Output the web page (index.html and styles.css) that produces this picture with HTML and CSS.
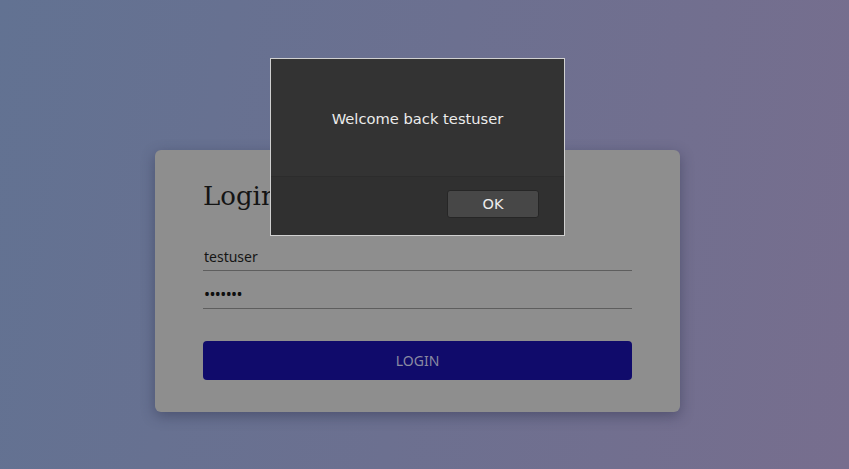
FILE: index.html
```html
<!DOCTYPE html>
<html>
<head>
<meta charset="utf-8">
<link rel="stylesheet" href="styles.css">
</head>
<body>
<div class="page">
  <div class="card">
    <h1 class="title">Login</h1>
    <div class="field"><span class="value">testuser</span></div>
    <div class="field"><span class="value dots">•••••••</span></div>
    <button class="login-btn">LOGIN</button>
  </div>
  <div class="dialog">
    <div class="dialog-body">Welcome back testuser</div>
    <div class="dialog-foot"><button class="ok-btn">OK</button></div>
  </div>
</div>
</body>
</html>
```

FILE: styles.css
```css
html, body {
  margin: 0;
  height: 100%;
}
body {
  background: linear-gradient(100deg, #627292 0%, #6c7090 50%, #776e8e 100%);
  font-family: "Noto Sans", "DejaVu Sans", sans-serif;
  overflow: hidden;
}
.page {
  position: relative;
  height: 100%;
  display: flex;
  justify-content: center;
  align-items: flex-start;
  padding-top: 150px;
  padding-right: 14px;
  box-sizing: border-box;
}
.card {
  width: 525px;
  height: 262px;
  box-sizing: border-box;
  background: #8e8e8e;
  border-radius: 6px;
  box-shadow: 0 4px 14px rgba(40, 44, 70, 0.45);
  padding: 30px 48px 0 48px;
  display: flex;
  flex-direction: column;
}
.title {
  margin: 0 0 30px 0;
  font-family: "DejaVu Serif", serif;
  font-weight: normal;
  font-size: 26px;
  line-height: 32px;
  color: #141414;
}
.field {
  border-bottom: 1px solid #5e5e5e;
  height: 29px;
  box-sizing: border-box;
  display: flex;
  align-items: center;
  margin-bottom: 9px;
}
.value {
  font-family: "Noto Sans", sans-serif;
  font-size: 14px;
  color: #151515;
  padding-left: 1px;
}
.dots {
  font-size: 16px;
  letter-spacing: -0.6px;
  color: #0e0e0e;
}
.login-btn {
  margin-top: 23px;
  height: 39px;
  border: none;
  border-radius: 4px;
  background: #100b6b;
  color: #8a8aa2;
  font-family: "Noto Sans", sans-serif;
  font-size: 14px;
  padding: 0;
}
.dialog {
  position: absolute;
  left: 270px;
  top: 58px;
  width: 295px;
  height: 178px;
  box-sizing: border-box;
  border: 1px solid #d0d0d0;
  background: #333333;
  display: flex;
  flex-direction: column;
}
.dialog-body {
  height: 118px;
  box-sizing: border-box;
  border-bottom: 1px solid #2c2c2c;
  color: #ececec;
  font-family: "DejaVu Sans", sans-serif;
  font-size: 14.7px;
  display: flex;
  justify-content: center;
  align-items: center;
  padding-top: 1px;
}
.dialog-foot {
  flex: 1;
  background: #303030;
  display: flex;
  justify-content: flex-end;
  align-items: flex-start;
  padding: 13px 25px 0 0;
}
.ok-btn {
  width: 92px;
  height: 28px;
  background: #474747;
  border: 1px solid #262626;
  border-radius: 3px;
  color: #ececec;
  font-family: "DejaVu Sans", sans-serif;
  font-size: 14.5px;
  padding: 0;
}
```
